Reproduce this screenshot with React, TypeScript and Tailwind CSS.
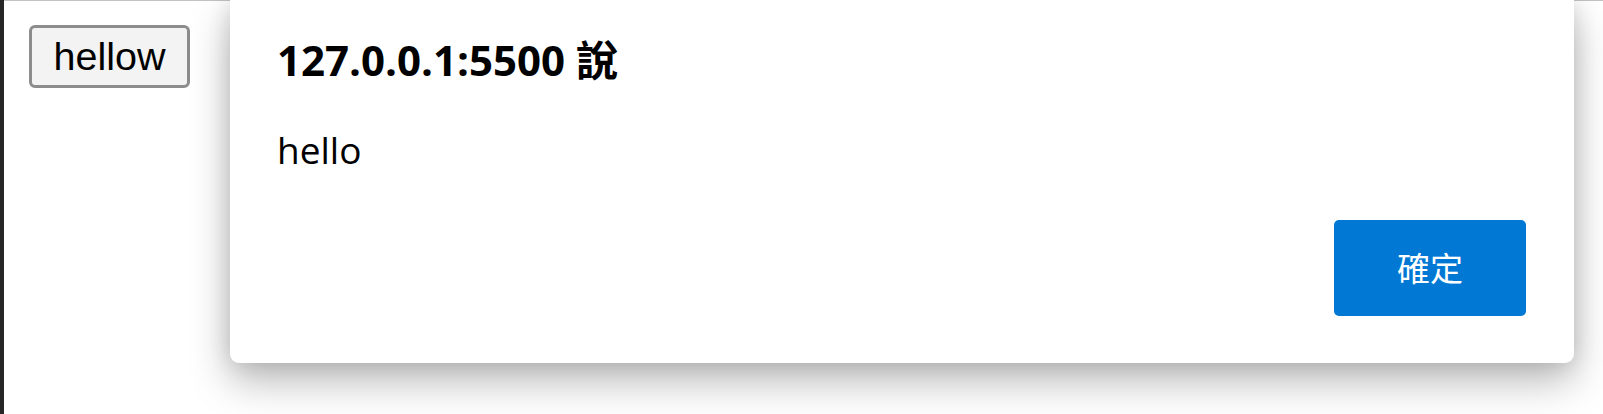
import React from "react";

export default function App() {
  return (
    <div className="relative w-[1603px] h-[414px] overflow-hidden bg-white flex">
      <div className="w-[4px] h-full bg-[#262626]" />
      <div className="flex-1 flex flex-col">
        <div className="h-[1px] bg-[#c2c2c2]" />
        <div className="pl-[25px] pt-[24px]">
          <button
            className="w-[161px] h-[63px] flex items-center justify-center border-[3px] border-[#8c8c8c] rounded-[6px] bg-[#f3f3f3] text-black text-[39.5px] leading-none"
            style={{ fontFamily: '"Liberation Sans", Arial, sans-serif' }}
          >
            hellow
          </button>
        </div>
      </div>

      <div
        className="absolute left-[230px] top-0 w-[1344px] bg-white rounded-b-[9px] shadow-[0_18px_40px_rgba(0,0,0,0.28),0_0_22px_rgba(0,0,0,0.12)] flex flex-col pl-[47px] pr-[48px] pt-[33px] pb-[47px]"
        style={{ fontFamily: '"Open Sans", "Noto Sans CJK TC", sans-serif' }}
      >
        <div className="text-[42px] leading-[53px] font-bold text-black">
          127.0.0.1:5500 說
        </div>
        <div className="mt-[40px] text-[37px] leading-[48px] text-black">
          hello
        </div>
        <div className="mt-[46px] flex justify-end">
          <button
            className="w-[192px] h-[96px] rounded-[5px] bg-[#0078d4] text-white text-[33px] flex items-center justify-center"
            style={{ fontFamily: '"Noto Sans CJK TC", sans-serif' }}
          >
            確定
          </button>
        </div>
      </div>
    </div>
  );
}
